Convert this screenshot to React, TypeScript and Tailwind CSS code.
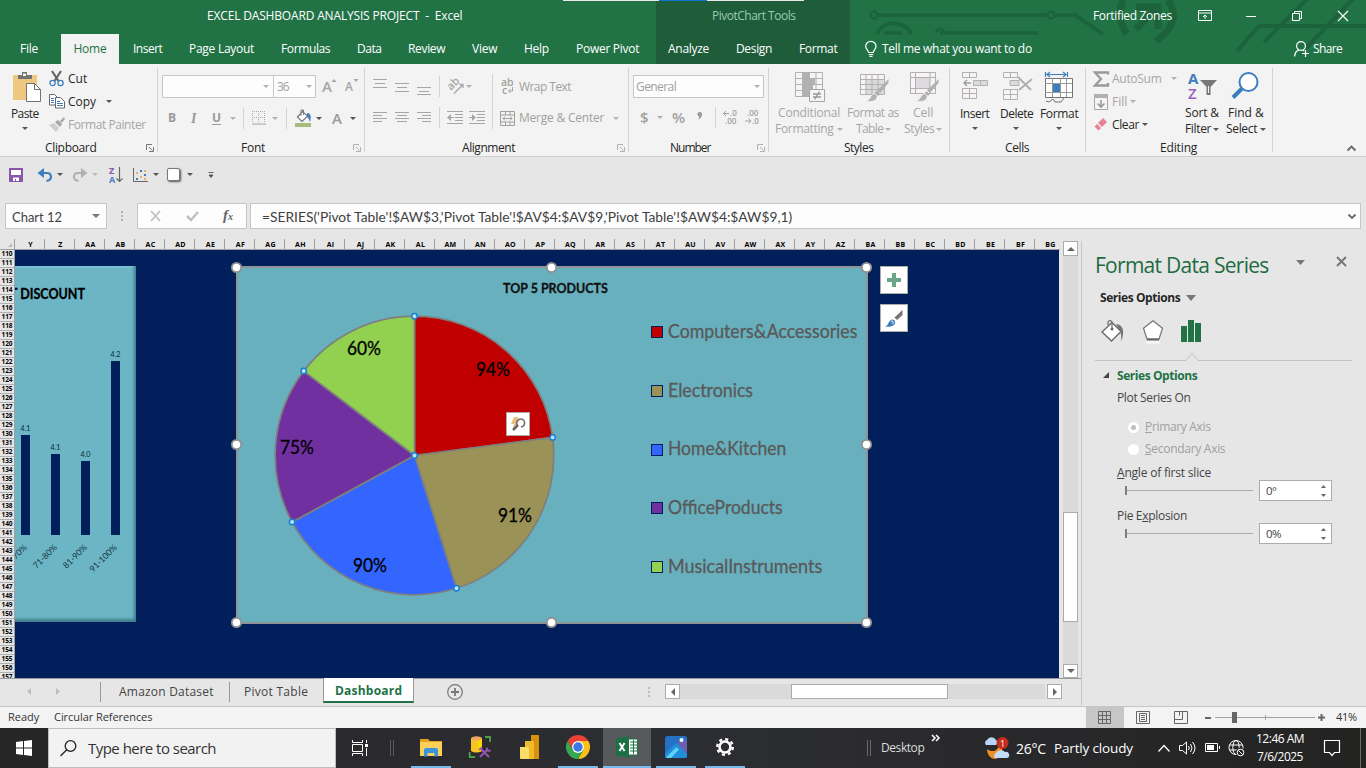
import React, { useLayoutEffect, useRef } from "react";

const UI = "font-['Open_Sans','Noto_Sans',sans-serif]";
const CAL = "font-['Lato','Open_Sans',sans-serif]";

/* A one-line label that fills its own box, by tracking or (squeeze) by glyph width. */
function T({ className = "", squeeze, children }: { className?: string; squeeze?: boolean; children: React.ReactNode }) {
  const box = useRef<HTMLSpanElement>(null);
  const inner = useRef<HTMLSpanElement>(null);
  useLayoutEffect(() => {
    const b = box.current!;
    const i = inner.current!;
    if (squeeze) {
      i.style.transform = "none";
      i.style.transform = `scaleX(${b.offsetWidth / i.offsetWidth})`;
      return;
    }
    i.style.letterSpacing = "0px";
    const n = (i.textContent || "").length;
    i.style.letterSpacing = (b.offsetWidth - i.offsetWidth) / n + "px";
  }, [squeeze]);
  return (
    <span ref={box} className={"inline-block shrink-0 whitespace-pre " + className}>
      <span ref={inner} className="inline-block origin-left">{children}</span>
    </span>
  );
}

function S({ w, h, className = "", children }: { w: number; h: number; className?: string; children: React.ReactNode }) {
  return (
    <svg width={w} height={h} viewBox={`0 0 ${w} ${h}`} fill="none" className={"block shrink-0 overflow-visible " + className}>
      {children}
    </svg>
  );
}

function Down({ className = "", c = "#555" }: { className?: string; c?: string }) {
  return (
    <S w={6} h={3} className={className}>
      <path d="M0 0h6L3 3z" fill={c} />
    </S>
  );
}

const Sep = ({ className = "" }: { className?: string }) => <div className={"w-px shrink-0 bg-[#d2d2d2] " + className} />;

function Launcher({ c, className }: { c: string; className: string }) {
  return (
    <S w={8} h={8} className={className}>
      <path d="M.5 6V.5H6M3 3l3.500 3.500M7.500 3v4.500H3" stroke={c} />
    </S>
  );
}

const G = "#b1b1b1";

function TitleBar() {
  return (
    <header className="relative h-[64px] shrink-0 bg-[#217346] text-[12px] text-white">
      <svg width="516" height="64" className="absolute left-[850px] top-0" fill="none" stroke="#1c633b">
        <circle cx="24" cy="15" r="3.500" strokeWidth="2.500" />
        <path d="M28 15h169M205 15h20l28 19" strokeWidth="3.500" />
        <circle cx="201" cy="15" r="3.500" strokeWidth="2.500" />
        <path d="M27 34a18 16 0 0 1 34 0M34 33h18M90 33h98" strokeWidth="3.500" />
        <path d="M86 33a4 4 0 0 1 8 0" strokeWidth="2.500" />
        <path d="M273 0q-8 17 4 34M318 0q15 22-12 41" strokeWidth="7" />
        <path d="M286 29l22-22M286 7h22v22" strokeWidth="7" />
        <path d="M387 51l22-25h107M414 42l48-48M456 48l50-52" strokeWidth="4" />
      </svg>
      <div className="relative flex h-[34px]">
        <div className="flex w-[656px] items-center pl-[207px] pb-[3px]">
          <T className="w-[255px]">EXCEL DASHBOARD ANALYSIS PROJECT  -  Excel</T>
        </div>
        <div className="flex w-[194px] items-center bg-[#1e5c3a] pl-[56px] pb-[3px] text-[#9bcbaf]">
          <T className="w-[83px]">PivotChart Tools</T>
        </div>
        <div className="flex items-center pl-[243px] pb-[3px]">
          <T className="w-[79px]">Fortified Zones</T>
          <S w={14} h={11} className="ml-[26px]">
            <path d="M.5.5h13v10H.5zM.5 3h13M7 9V5M5 7l2-2 2 2" stroke="#fff" />
          </S>
          <S w={10} h={10} className="ml-[34px]"><path d="M0 5.500h10" stroke="#fff" /></S>
          <S w={10} h={10} className="ml-[36px]">
            <path d="M.5 2.500h7v7h-7zM2.500 2V.5h7v7H8" stroke="#fff" />
          </S>
          <S w={10} h={10} className="ml-[36px]"><path d="M0 0l10 10M10 0L0 10" stroke="#fff" strokeWidth="1.100" /></S>
        </div>
        <div className="absolute left-[563px] top-0 flex h-px w-[241px] bg-[#e8e8e8]">
          <div className="ml-[96px] h-px w-[48px] bg-[#1177d7]" />
        </div>
      </div>
      <div className="relative flex h-[30px]">
        <div className="flex w-[656px] items-center">
          <T className="ml-[20px] w-[18px]">File</T>
          <div className="ml-[23px] flex h-full w-[58px] items-center justify-center bg-[#f3f3f3] text-[#217346]">
            <T className="w-[33px]">Home</T>
          </div>
          <T className="ml-[14px] w-[29px]">Insert</T>
          <T className="ml-[27px] w-[65px]">Page Layout</T>
          <T className="ml-[27px] w-[49px]">Formulas</T>
          <T className="ml-[27px] w-[24px]">Data</T>
          <T className="ml-[27px] w-[37px]">Review</T>
          <T className="ml-[27px] w-[25px]">View</T>
          <T className="ml-[27px] w-[25px]">Help</T>
          <T className="ml-[27px] w-[63px]">Power Pivot</T>
        </div>
        <div className="flex w-[194px] items-center bg-[#1e5c3a]">
          <T className="ml-[12px] w-[41px]">Analyze</T>
          <T className="ml-[27px] w-[36px]">Design</T>
          <T className="ml-[27px] w-[38px]">Format</T>
        </div>
        <div className="flex items-center">
          <S w={12} h={16} className="ml-[15px]">
            <path d="M3.500 11.500C3.500 9 .7 8.500.7 5.300a5 4.800 0 0 1 10.300 0C11 8.500 8.300 9 8.300 11.500zM3.700 13.500h4.600M4.500 15.400h3" stroke="#fff" strokeWidth="1.200" />
          </S>
          <T className="ml-[5px] w-[150px]">Tell me what you want to do</T>
          <S w={16} h={16} className="ml-[262px]">
            <circle cx="7" cy="5" r="4.400" stroke="#fff" strokeWidth="1.200" />
            <path d="M.6 15.500C1 12 3 9.500 5 9.200M9 9l1 1M11.500 9v7M8 12.500h7" stroke="#fff" strokeWidth="1.200" />
          </S>
          <T className="ml-[3px] w-[29px]">Share</T>
        </div>
      </div>
    </header>
  );
}

function Group({ className, children, label }: { className: string; children: React.ReactNode; label: React.ReactNode }) {
  return (
    <section className={"relative flex shrink-0 flex-col " + className}>
      <div className="flex h-[76px]">{children}</div>
      <div className="flex h-[17px] items-center">{label}</div>
      <div className="absolute right-0 top-[4px] h-[84px] w-px bg-[#d2d2d2]" />
    </section>
  );
}

function Lines({ ys, className }: { ys: [number, number, number][]; className: string }) {
  return (
    <S w={14} h={16} className={className}>
      {ys.map(([y, a, b], i) => <path key={i} d={`M${a} ${y + 0.5}H${b}`} stroke="#a6a6a6" />)}
    </S>
  );
}

function Brush() {
  return (
    <g>
      <path d="M28.500 7v4L20 21l-3-2.500z" fill="#b1b1b1" />
      <path d="M16.500 19.500l3 2.500-1.500 2-3.500-3z" fill="#a9a4a9" />
      <path d="M6 29c5-1 4-6 8-7.500 3 .5 4 3 2.500 5.500C14 30 9 30 6 29z" fill="#b1b1b1" stroke="#f3f3f3" />
    </g>
  );
}

function Ribbon() {
  return (
    <div className="flex h-[93px] shrink-0 border-b border-[#cfcfcf] bg-[#f3f3f3] text-[12px] text-[#262626]">
      <Group className="w-[158px]" label={<><T className="ml-[45px] w-[51px]">Clipboard</T><Launcher c="#777" className="ml-[50px]" /></>}>
        <div className="flex w-[49px] flex-col">
          <S w={30} h={31} className="ml-[12px] mt-[8px]">
            <path d="M1 3h24v25H1z" fill="#edc87e" />
            <path d="M6 7V3h4V0h5v3h5v4z" fill="#737373" /><path d="M11 1.500h3V4h-3z" fill="#f3f3f3" />
            <path d="M14.500 11.500h8l6 6v12h-14z" fill="#fff" stroke="#737373" /><path d="M22.500 11.500v6h6" stroke="#737373" />
          </S>
          <T className="ml-[11px] mt-[2px] w-[28px]">Paste</T>
          <Down className="ml-[22px] mt-[4px]" />
        </div>
        <div className="flex flex-col pt-[3px]">
          <div className="flex h-[23px] items-center">
            <S w={15} h={16}>
              <path d="M3 0l6.500 10M12 0L5.500 10" stroke="#666" strokeWidth="2.200" />
              <circle cx="3.500" cy="12" r="2.600" stroke="#3e7ebf" strokeWidth="1.300" /><circle cx="11.500" cy="12" r="2.600" stroke="#3e7ebf" strokeWidth="1.300" />
            </S>
            <T className="ml-[4px] w-[19px]">Cut</T>
          </div>
          <div className="flex h-[23px] items-center">
            <S w={16} h={15}>
              <path d="M.5.500h5l3 3V11h-8z" fill="#fff" stroke="#666" /><path d="M2 4.500h3M2 6.500h3M2 8.500h3" stroke="#3e7ebf" />
              <path d="M6.500 3.500h5l4 4v6.500h-9z" fill="#fff" stroke="#666" /><path d="M8 7.500h3M8 9.500h6M8 11.500h6" stroke="#3e7ebf" />
            </S>
            <T className="ml-[3px] w-[28px]">Copy</T>
            <Down className="ml-[10px]" />
          </div>
          <div className="flex h-[23px] items-center text-[#a6a6a6]">
            <S w={16} h={15}>
              <path d="M0 8l5-2 5 5-3 4z" fill="#d0ccd0" /><path d="M6 5l5 5 2-3-4-4zM11 4l4-4 1 2-3.500 4z" fill="#a6a6a6" />
            </S>
            <T className="ml-[3px] w-[78px]">Format Painter</T>
          </div>
        </div>
      </Group>

      <Group className="w-[207px]" label={<><T className="ml-[83px] w-[24px]">Font</T><Launcher c={G} className="ml-[88px]" /></>}>
        <div className="flex flex-col pl-[4px]">
          <div className="mt-[11px] flex h-[23px] items-center">
            <div className="flex h-[23px] w-[112px] items-center justify-end border border-[#c6c6c6] bg-[#fdfdfd] pr-[4px]"><Down c={G} /></div>
            <div className="-ml-px flex h-[23px] w-[43px] items-center border border-[#c6c6c6] bg-[#fdfdfd] text-[#a0a0a0]">
              <T className="ml-[3px] w-[12px]">36</T><Down c={G} className="ml-[17px]" />
            </div>
            <span className="ml-[6px] w-[10px] text-[15px] font-semibold text-[#a6a6a6]">A</span><S w={4} h={3} className="mb-[12px]"><path d="M2 0l2.500 3h-5z" fill="#a6a6a6" /></S>
            <span className="ml-[9px] w-[9px] text-[12px] font-semibold text-[#a6a6a6]">A</span><S w={4} h={3} className="mb-[12px]"><path d="M2 3l2.500-3h-5z" fill="#a6a6a6" /></S>
          </div>
          <div className="mt-[9px] flex h-[22px] items-center text-[#9a9a9a]">
            <span className="ml-[6px] w-[9px] text-[12px] font-bold">B</span>
            <span className="ml-[14px] w-[8px] font-['Liberation_Serif',serif] text-[14px] font-bold italic">I</span>
            <span className="ml-[13px] w-[9px] border-b border-[#9a9a9a] text-[12px] font-bold leading-[13px]">U</span>
            <Down c={G} className="ml-[9px]" />
            <Sep className="ml-[7px] h-[21px]" />
            <S w={14} h={14} className="ml-[8px]">
              <path d="M0 .5h14M0 6.500h14M.5 0v12M6.500 0v12M12.500 0v12" stroke="#b7a3b7" strokeDasharray="1 1" /><path d="M0 13h14" stroke="#a0a0a0" />
            </S>
            <Down c={G} className="ml-[6px]" />
            <Sep className="ml-[8px] h-[21px]" />
            <S w={17} h={17} className="ml-[8px]">
              <path d="M0 13h16v4H0z" fill="#a9bb7c" /><path d="M2.500 7l5-5.500 5 4.500-5.500 5.500z" fill="#fff" stroke="#777" strokeWidth="1.200" /><path d="M6 6V0h2.500v5" stroke="#777" />
              <path d="M12 3c4 0 4.500 4 3 9-1-2-1-4-3-5z" fill="#3e7ebf" />
            </S>
            <Down className="ml-[4px]" />
            <span className="ml-[10px] w-[11px] text-[15px] font-semibold">A</span>
            <Down className="ml-[7px]" />
          </div>
        </div>
      </Group>

      <Group className="w-[264px]" label={<><T className="ml-[97px] w-[53px]">Alignment</T><Launcher c={G} className="ml-[102px]" /></>}>
        <div className="flex flex-col pl-[8px]">
          <div className="mt-[11px] flex h-[23px] items-center">
            <Lines className="" ys={[[0, 0, 14], [4, 2, 12], [8, 0, 14]]} />
            <Lines className="ml-[8px]" ys={[[4, 0, 14], [8, 2, 12], [12, 0, 14]]} />
            <Lines className="ml-[8px]" ys={[[8, 0, 14], [12, 2, 12], [15, 0, 14]]} />
            <Sep className="ml-[8px] h-[21px]" />
            <S w={17} h={15} className="ml-[7px]">
              <text x="0" y="0" fontSize="11" fontWeight="600" fill="#a6a6a6" transform="translate(4 12) rotate(-45)">ab</text>
              <path d="M7 14.500L16 5.500M12.500 5.500H16V9" stroke="#a6a6a6" strokeWidth="1.300" />
            </S>
            <Down c={G} className="ml-[2px]" />
          </div>
          <div className="mt-[8px] flex h-[22px] items-center">
            <Lines className="" ys={[[3, 0, 14], [6, 0, 9], [9, 0, 14], [12, 0, 9]]} />
            <Lines className="ml-[8px]" ys={[[3, 0, 14], [6, 2, 12], [9, 0, 14], [12, 2, 12]]} />
            <Lines className="ml-[8px]" ys={[[3, 0, 14], [6, 5, 14], [9, 0, 14], [12, 5, 14]]} />
            <Sep className="ml-[8px] h-[21px]" />
            <S w={16} h={13} className="ml-[7px]"><path d="M0 .5h16M8 3.500h8M8 6.500h8M8 9.500h8M0 12.500h16M1 6.500h6" stroke="#a6a6a6" /><path d="M0 6.500L4 3v7z" fill="#a6a6a6" /></S>
            <S w={16} h={13} className="ml-[6px]"><path d="M0 .5h16M8 3.500h8M8 6.500h8M8 9.500h8M0 12.500h16M0 6.500h5" stroke="#a6a6a6" /><path d="M7 6.500L3 3v7z" fill="#a6a6a6" /></S>
          </div>
        </div>
        <Sep className="ml-[7px] mt-[10px] h-[55px]" />
        <div className="flex flex-col pl-[7px] text-[#a0a0a0]">
          <div className="mt-[11px] flex h-[23px] items-center">
            <S w={16} h={15}>
              <text x="1" y="7" fontSize="10.500" fontWeight="600" fill="#a0a0a0">ab</text><text x="2" y="15" fontSize="10.500" fontWeight="600" fill="#a0a0a0">c</text>
              <path d="M12.500 8v4H9M10.500 10l-2 2 2 2" stroke="#a0a0a0" />
            </S>
            <T className="ml-[3px] w-[52px]">Wrap Text</T>
          </div>
          <div className="mt-[9px] flex h-[22px] items-center">
            <S w={15} h={15}><path d="M.5.5h14v14H.5zM.5 4h14M.5 11h14M5.500 0v4M10 0v4M5.500 11v4M10 11v4M3 7.500h9M5 5.500l-2 2 2 2M10 5.500l2 2-2 2" stroke="#a0a0a0" /></S>
            <T className="ml-[4px] w-[85px]">Merge &amp; Center</T>
            <Down c={G} className="ml-[9px]" />
          </div>
        </div>
      </Group>

      <Group className="w-[140px]" label={<><T className="ml-[41px] w-[41px]">Number</T><Launcher c={G} className="ml-[46px]" /></>}>
        <div className="flex flex-col pl-[4px] text-[#a0a0a0]">
          <div className="mt-[11px] flex h-[23px] w-[131px] items-center border border-[#c6c6c6] bg-[#fdfdfd]">
            <T className="ml-[2px] w-[40px]">General</T><Down c={G} className="ml-[78px]" />
          </div>
          <div className="mt-[8px] flex h-[22px] items-center text-[14px]">
            <span className="ml-[7px] w-[9px] text-[15px] font-semibold">$</span>
            <Down c={G} className="ml-[8px]" />
            <T className="ml-[9px] w-[13px] font-semibold" squeeze>%</T>
            <S w={6} h={8} className="mb-[2px] ml-[12px]"><path d="M2.500 0a2.300 2.300 0 0 1 2.500 2.500C5 5 3.500 6.500 1 7.500 2 6 2.500 5 2 4.500A2.300 2.300 0 0 1 2.500 0z" fill="#9a9a9a" /></S>
            <Sep className="ml-[12px] h-[21px]" />
            <S w={14} h={14} className="ml-[7px]"><path d="M0 3.500h6M3 1L.5 3.500 3 6" stroke="#a0a0a0" /><text x="7" y="6" fontSize="8" fontWeight="600" fill="#a0a0a0">.0</text><text x="2" y="14" fontSize="8" fontWeight="600" fill="#a0a0a0">.00</text></S>
            <S w={14} h={14} className="ml-[8px]"><path d="M0 11h6M3.500 8.500L6 11l-2.500 2.500" stroke="#a0a0a0" /><text x="2" y="6" fontSize="8" fontWeight="600" fill="#a0a0a0">.00</text><text x="7" y="14" fontSize="8" fontWeight="600" fill="#a0a0a0">.0</text></S>
          </div>
        </div>
      </Group>

      <Group className="w-[181px]" label={<T className="ml-[75px] w-[29px]">Styles</T>}>
        <div className="flex text-[#a6a6a6]">
          <div className="ml-[6px] w-[68px]">
            <S w={30} h={31} className="ml-[20px] mt-[8px]">
              <path d="M.5.5h27v24H.5z" fill="#f7f3f7" stroke="#b1b1b1" /><path d="M0 6.500h27M0 12.500h27M0 18.500h27M7.500 0v24M14.500 0v24M21 0v24" stroke="#b1b1b1" />
              <path d="M8 0h6v6H8zM8 6h12v6H8zM8 12h10v6H8zM8 18h6v6H8z" fill="#b1b1b1" /><path d="M14.500 17.500h15v12h-15z" fill="#f7f3f7" stroke="#a6a6a6" />
              <path d="M18 22h8M18 25h8M24.500 19.500l-5 8" stroke="#999" strokeWidth="1.300" />
            </S>
            <div className="mt-[2px] flex h-[16px] items-center pl-[3px]"><T className="w-[62px]">Conditional</T></div>
            <div className="flex h-[16px] items-center"><T className="w-[59px]">Formatting</T><Down c={G} className="ml-[3px]" /></div>
          </div>
          <div className="ml-[4px] w-[53px]">
            <S w={30} h={31} className="ml-[13px] mt-[8px]">
              <path d="M.5 2.500h24v20H.5z" fill="#f7f3f7" stroke="#b1b1b1" /><path d="M6 8h18v14H6z" fill="#dcdadc" /><path d="M0 7.500h24M0 12.500h24M0 17.500h24M6 2v20M12 2v20M18 2v20" stroke="#b1b1b1" /><Brush />
            </S>
            <div className="mt-[2px] flex h-[16px] items-center"><T className="w-[52px]">Format as</T></div>
            <div className="flex h-[16px] items-center pl-[9px]"><T className="w-[27px]">Table</T><Down c={G} className="ml-[2px]" /></div>
          </div>
          <div className="ml-[4px] w-[42px]">
            <S w={30} h={31} className="ml-[6px] mt-[8px]">
              <path d="M.5.5h25v21H.5z" fill="#f7f3f7" stroke="#b1b1b1" /><path d="M6 6h14v10H6z" fill="#dcdadc" /><path d="M0 5.500h25M0 16.500h25M5.500 0v21M20 0v21" stroke="#b1b1b1" /><Brush />
            </S>
            <div className="mt-[2px] flex h-[16px] items-center pl-[9px]"><T className="w-[20px]">Cell</T></div>
            <div className="flex h-[16px] items-center"><T className="w-[30px]">Styles</T><Down c={G} className="ml-[2px]" /></div>
          </div>
        </div>
      </Group>

      <Group className="w-[136px]" label={<T className="ml-[55px] w-[24px]">Cells</T>}>
        <div className="flex">
          <div className="ml-[10px] w-[30px]">
            <S w={28} h={31} className="ml-[2px] mt-[8px]">
              <path d="M.5.500h14v5H.5zM7.500.5v5M.5 16.500h14v10H.5zM.5 21.500h14M7.500 16.500v10" fill="#f7f3f7" stroke="#b1b1b1" /><path d="M11.500 8.500h14v5h-14zM18.500 8.500v5" fill="#dcdadc" stroke="#b1b1b1" /><path d="M2 11h7M5 8l-3 3 3 3" stroke="#a0a0a0" strokeWidth="1.500" />
            </S>
            <T className="mt-[2px] w-[29px]">Insert</T><Down className="ml-[12px] mt-[4px]" />
          </div>
          <div className="ml-[10px] w-[34px]">
            <S w={30} h={31} className="ml-[3px] mt-[8px]">
              <path d="M.5.500h14v5H.5zM7.500.5v5M.5 17.500h14v10H.5zM.5 22.500h14M7.500 17.500v10" fill="#f7f3f7" stroke="#b1b1b1" /><path d="M7 8.500h9v5H7z" fill="#dcdadc" stroke="#b1b1b1" /><path d="M15 5l13 13M29 7L16 18" stroke="#b1b1b1" strokeWidth="2" />
            </S>
            <T className="mt-[2px] w-[33px]">Delete</T><Down className="ml-[13px] mt-[4px]" />
          </div>
          <div className="ml-[6px] w-[40px]">
            <S w={30} h={31} className="ml-[5px] mt-[8px]">
              <path d="M.5 0v5M22.500 0v5M2 2.500h19M5 0L2 2.500 5 5M18 0l3 2.500L18 5" stroke="#3e7ebf" strokeWidth="1.200" />
              <path d="M.5 6.500h27v19H.5z" fill="#fff" stroke="#737373" /><path d="M0 11.500h27M0 20.500h27M7.500 6v19M15.500 6v19M21.500 6v19" stroke="#999" /><path d="M8 12h7v8H8z" fill="#3e7ebf" /><path d="M1 29l3 1 4-3 2 3h6l3-4" stroke="#737373" />
            </S>
            <T className="mt-[2px] w-[38px]">Format</T><Down className="ml-[16px] mt-[4px]" />
          </div>
        </div>
      </Group>

      <Group className="w-[187px]" label={<T className="ml-[74px] w-[37px]">Editing</T>}>
        <div className="flex w-[99px] flex-col pl-[7px] pt-[3px]">
          <div className="flex h-[23px] items-center text-[#a6a6a6]">
            <S w={16} h={16}><path d="M15 3.500V1.500H2l6 6.500-6 6.500h13v-2.500" stroke="#9a9a9a" strokeWidth="2.300" /></S>
            <T className="ml-[3px] w-[50px]">AutoSum</T><Down c={G} className="ml-[9px]" />
          </div>
          <div className="flex h-[23px] items-center text-[#a6a6a6]">
            <S w={15} h={16} className="ml-px"><path d="M.5.500h13v15H.5z" fill="#f7f3f7" stroke="#a6a6a6" /><path d="M0 0h14v4H0z" fill="#b1b1b1" /><path d="M7 6v7M3.500 9.500L7 13l3.500-3.500" stroke="#999" strokeWidth="1.600" /></S>
            <T className="ml-[3px] w-[15px]">Fill</T><Down c={G} className="ml-[3px]" />
          </div>
          <div className="flex h-[23px] items-center">
            <S w={15} h={13} className="ml-px"><path d="M4 5l5-5 4 4-5 5z" fill="#e58395" /><path d="M3 6l4 4-2.500 2.500L.5 8.500z" fill="#e58395" /></S>
            <T className="ml-[3px] w-[27px]">Clear</T><Down className="ml-[3px]" />
          </div>
        </div>
        <div className="w-[35px]">
          <S w={30} h={31} className="ml-[3px] mt-[8px]">
            <text x="0" y="12" fontSize="15" fontWeight="700" fill="#3e7ebf">A</text><text x="0" y="27" fontSize="15" fontWeight="600" fill="#9a5fc0">Z</text>
            <path d="M12 8h17l-6.500 7v8h-4v-8z" fill="#777" /><path d="M20.500 14v7" stroke="#f3f3f3" />
          </S>
          <div className="mt-[2px] flex h-[16px] items-center"><T className="w-[34px]">Sort &amp;</T></div>
          <div className="flex h-[16px] items-center"><T className="w-[26px]">Filter</T><Down className="ml-[2px]" /></div>
        </div>
        <div className="ml-[6px] w-[40px]">
          <S w={30} h={31} className="ml-[5px] mt-[8px]"><circle cx="17.500" cy="10" r="9" fill="#fff" stroke="#3e7ebf" strokeWidth="2" /><path d="M11 16.500L2 25.500" stroke="#3e7ebf" strokeWidth="4" /></S>
          <div className="mt-[2px] flex h-[16px] items-center pl-[2px]"><T className="w-[36px]">Find &amp;</T></div>
          <div className="flex h-[16px] items-center"><T className="w-[31px]">Select</T><Down className="ml-[3px]" /></div>
        </div>
      </Group>
      <div className="flex flex-1 items-end justify-end pb-[5px] pr-[10px]">
        <S w={9} h={5}><path d="M.5 4.500l4-4 4 4" stroke="#666" strokeWidth="1.800" /></S>
      </div>
    </div>
  );
}

function QuickAccess() {
  return (
    <div className="flex h-[36px] shrink-0 items-center pb-px">
      <S w={14} h={14} className="ml-[9px]"><path d="M1 1h12v12H1z" fill="#fff" stroke="#8a56ac" strokeWidth="2" /><path d="M1 7h12v6H1z" fill="#8a56ac" /><path d="M4 9.500h6V13H7v-2H6v2H4z" fill="#fff" /></S>
      <S w={15} h={14} className="ml-[15px]"><path d="M2 5h7q4 0 4 4 0 3-4.500 4" stroke="#3e7ebf" strokeWidth="2.200" /><path d="M6 0v10L-.5 5z" fill="#3e7ebf" /></S>
      <Down className="ml-[4px]" />
      <S w={15} h={14} className="ml-[10px]"><path d="M12 5H5Q1 5 1 9q0 3 4.500 4" stroke="#b1b1b1" strokeWidth="2.200" /><path d="M8 0v10l6.500-5z" fill="#b1b1b1" /></S>
      <Down c="#bbb" className="ml-[4px]" />
      <S w={14} h={16} className="ml-[11px]"><text x="0" y="7" fontSize="9" fontWeight="700" fill="#8a56ac">Z</text><text x="0" y="15.500" fontSize="9" fontWeight="700" fill="#3e7ebf">A</text><path d="M10.500 0v15M7.500 11.500l3 3 3-3" stroke="#666" strokeWidth="1.200" /></S>
      <S w={15} h={14} className="ml-[10px]"><path d="M.5 0v13.500H15" stroke="#666" /><path d="M7 2h2v2H7zM11 6h2v2h-2zM3 10h2v2H3z" fill="#3e7ebf" /><path d="M3 4h2v2H3zM7 8h2v2H7zM11 10h2v2h-2zM11 2h2v2h-2z" fill="#e8b35c" /></S>
      <Down className="ml-[5px]" />
      <div className="ml-[8px] h-[13px] w-[13px] rounded-[2px] border border-[#777] bg-white shadow-[1px_1px_2px_#555]" />
      <Down className="ml-[7px]" />
      <S w={6} h={6} className="ml-[15px]"><path d="M.5.5h5M1 3h4L3 5.500z" stroke="#555" fill="#555" strokeWidth=".9" /></S>
    </div>
  );
}

function FormulaBar() {
  return (
    <div className={"flex h-[46px] shrink-0 items-start pt-[10px] text-[14px] text-[#404040] " + CAL}>
      <div className="ml-[5px] flex h-[26px] w-[102px] items-center border border-[#c6c6c6] bg-[#fdfdfd]">
        <T squeeze className="ml-[6px] w-[50px]">Chart 12</T>
        <S w={8} h={4} className="ml-[30px]"><path d="M0 0h8L4 4z" fill="#777" /></S>
      </div>
      <S w={2} h={11} className="ml-[14px] mt-[8px]"><path d="M0 0h2v2H0zM0 4h2v2H0zM0 8h2v2H0z" fill="#b1b1b1" /></S>
      <div className="ml-[14px] flex h-[26px] w-[110px] items-center border border-[#c6c6c6] bg-[#fdfdfd]">
        <S w={11} h={10} className="ml-[12px]"><path d="M1 0l9 10M10 0L1 10" stroke="#c0c0c0" strokeWidth="1.800" /></S>
        <S w={13} h={10} className="ml-[25px]"><path d="M1 5l4 4 7-8" stroke="#c0c0c0" strokeWidth="2.500" /></S>
        <span className="ml-[24px] mb-[2px] font-['Liberation_Serif',serif] text-[15px] font-bold italic text-[#666]">f<span className="text-[10px]">x</span></span>
      </div>
      <div className="ml-[3px] flex h-[26px] w-[1111px] items-center border border-[#c6c6c6] bg-[#fdfdfd]">
        <T squeeze className="ml-[11px] w-[530px]">=SERIES('Pivot Table'!$AW$3,'Pivot Table'!$AV$4:$AV$9,'Pivot Table'!$AW$4:$AW$9,1)</T>
        <S w={8} h={5} className="ml-[556px]"><path d="M.5.500l3.500 3.500 3.500-3.500" stroke="#666" strokeWidth="1.800" /></S>
      </div>
    </div>
  );
}

const COLS = "Y Z AA AB AC AD AE AF AG AH AI AJ AK AL AM AN AO AP AQ AR AS AT AU AV AW AX AY AZ BA BB BC BD BE BF BG".split(" ");
const ROWS = Array.from({ length: 48 }, (_, i) => 110 + i);

const PIE = [
  { name: "Computers&Accessories", v: 94, c: "#c00000", lx: 493, ly: 370, wc: "w-[189px]" },
  { name: "Electronics", v: 91, c: "#9a9256", lx: 515, ly: 516, wc: "w-[85px]" },
  { name: "Home&Kitchen", v: 90, c: "#3366ff", lx: 370, ly: 566, wc: "w-[118px]" },
  { name: "OfficeProducts", v: 75, c: "#7030a0", lx: 297, ly: 448, wc: "w-[115px]" },
  { name: "MusicalInstruments", v: 60, c: "#92d050", lx: 364, ly: 349, wc: "w-[154px]" },
];

function Pie() {
  const total = PIE.reduce((s, p) => s + p.v, 0);
  const cx = 176.5, cy = 187.5, r = 139.3;
  const at = (t: number): [number, number] => [cx + r * Math.sin(t * 2 * Math.PI), cy - r * Math.cos(t * 2 * Math.PI)];
  let acc = 0;
  const slices = PIE.map((p) => {
    const a = at(acc / total);
    acc += p.v;
    const b = at(acc / total);
    return { p, a, d: `M${cx} ${cy}L${a[0]} ${a[1]}A${r} ${r} 0 0 1 ${b[0]} ${b[1]}Z` };
  });
  return (
    <svg width="380" height="354" className={"absolute left-0 top-0 " + CAL}>
      {slices.map((s) => <path key={s.p.name} d={s.d} fill={s.p.c} stroke="#7f7f7f" strokeWidth="1.700" />)}
      {[[cx, cy] as [number, number], ...slices.map((s) => s.a)].map(([x, y], i) => (
        <circle key={i} cx={x} cy={y} r="2.700" fill="#bfe0f5" stroke="#1382d6" strokeWidth="1.500" />
      ))}
      {slices.map(({ p }) => (
        <text key={p.name} x={p.lx - 238 - 17} y={p.ly - 268 + 6} fontSize="18.500" textLength="34" lengthAdjust="spacingAndGlyphs" fill="#000" stroke="#000" strokeWidth=".3">{p.v}%</text>
      ))}
    </svg>
  );
}

function DiscountChart() {
  const bars = [[6, 169, "4.1", "61-70%"], [36, 188, "4.1", "71-80%"], [66, 195, "4.0", "81-90%"], [96, 95, "4.2", "91-100%"]] as const;
  return (
    <div className={"absolute left-0 top-[16px] h-[356px] w-[121px] overflow-hidden bg-[#6bb5c5] shadow-[inset_-2px_-3px_3px_#3f7e8c,inset_0_2px_2px_#7cc3d1] " + CAL}>
      <svg width="121" height="356">
        <text x="-5" y="32.500" fontSize="14.500" fontWeight="700" textLength="75" lengthAdjust="spacingAndGlyphs" stroke="#000" strokeWidth=".3">T DISCOUNT</text>
        {bars.map(([x, y, v, l]) => (
          <g key={x}>
            <rect x={x} y={y} width="9" height={269 - y} fill="#001f5b" />
            <text x={x - 0.5} y={y - 4.5} fontSize="8" textLength="10" lengthAdjust="spacingAndGlyphs" fill="#0c2a33">{v}</text>
            <text x={x + 6.5} y={282} fontSize="8.500" textAnchor="end" fill="#16323a" transform={`rotate(-45 ${x + 6.5} 282)`}>{l}</text>
          </g>
        ))}
      </svg>
    </div>
  );
}

function ProductsChart() {
  return (
    <div className={"absolute left-[221px] top-[16px] h-[358px] w-[632px] border-2 border-[#8f9496] bg-[#68b0be] " + CAL}>
      <Pie />
      <div className="-mt-[3px] ml-[265px] flex h-[44px] items-center text-[14px] font-bold text-[#111]"><T squeeze className="w-[105px] [-webkit-text-stroke:0.3px_#111]">TOP 5 PRODUCTS</T></div>
      <ul className="ml-[413px] -mt-[6px] flex flex-col">
        {PIE.map((p) => (
          <li key={p.name} className="flex h-[58.700px] items-center text-[19px] text-[#595959]">
            <svg width="12" height="12" className="shrink-0"><rect x=".5" y=".5" width="11" height="11" fill={p.c} stroke="#001f5b" /></svg>
            <T squeeze className={"ml-[5px] -mt-[2px] [-webkit-text-stroke:0.3px_#595959] " + p.wc}>{p.name}</T>
          </li>
        ))}
      </ul>
      <svg width="632" height="358" className="absolute -left-[2px] -top-[2px] overflow-visible">
        {[[0.5, 1.5], [315.5, 1.5], [630.5, 1.5], [0.5, 178.5], [630.5, 178.5], [0.5, 356.5], [315.5, 356.5], [630.5, 356.5]].map(([x, y], i) => (
          <circle key={i} cx={x} cy={y} r="4.700" fill="#fff" stroke="#8f8f8f" strokeWidth="1.800" />
        ))}
      </svg>
      <div className="absolute left-[268px] top-[144px] flex h-[24px] w-[24px] items-center justify-center border border-[#ababab] bg-white">
        <S w={14} h={14}><path d="M3 0h4.500L6 4h2L2 12l1-5H0z" fill="#edc07e" /><path d="M6.500 8.500A4 4 0 1 1 10 10" stroke="#737373" strokeWidth="1.600" /><path d="M7 8l-5 5" stroke="#666" strokeWidth="2.500" /></S>
      </div>
    </div>
  );
}

function Sheet() {
  return (
    <div className="flex h-[439px] w-[1060px] shrink-0 flex-col overflow-hidden">
      <div className="flex h-[11px] shrink-0 overflow-hidden">
        <div className="flex w-[15px] shrink-0 items-end justify-end border-b border-r border-[#9f9f9f] p-[2px]"><S w={4} h={4}><path d="M4 0v4H0z" fill="#bbb" /></S></div>
        {COLS.map((c) => (
          <div key={c} className="flex w-[30px] shrink-0 items-center justify-center border-b border-r border-[#9f9f9f] pl-[2px] text-[7px] font-bold leading-none tracking-[0.3px] text-black">{c}</div>
        ))}
      </div>
      <div className="flex h-[428px]">
        <div className="w-[15px] shrink-0 overflow-hidden border-r border-[#9f9f9f]">
          {ROWS.map((r) => (
            <div key={r} className="flex h-[9px] items-center justify-center border-b border-[#b0b0b0] pt-px text-[6.500px] font-bold leading-none text-black">{r}</div>
          ))}
        </div>
        <div className="relative w-[1044px] shrink-0 overflow-hidden bg-[#001f5b]">
          <DiscountChart />
          <ProductsChart />
          <div className="absolute left-[865px] top-[16px] flex flex-col gap-[10px]">
            <div className="flex h-[28px] w-[28px] items-center justify-center border border-[#ababab] bg-white"><S w={14} h={14}><path d="M5 0h4v5h5v4H9v5H5V9H0V5h5z" fill="#6aa58c" /></S></div>
            <div className="flex h-[28px] w-[28px] items-center justify-center border border-[#ababab] bg-white">
              <S w={18} h={17}><path d="M17.500 0v5L12 10 9.500 7.500z" fill="#737373" /><path d="M0 16.500c4-1 3-6 7-7 3 0 4 3 2.500 5C7 17 3 17 0 16.500z" fill="#3e7ebf" /><path d="M6 11.500c2-1.500 3 1 1.500 2.500" stroke="#fff" /></S>
            </div>
          </div>
        </div>
      </div>
    </div>
  );
}

function VScroll() {
  return (
    <div className="flex h-[439px] w-[21px] shrink-0 flex-col pl-[3px] pt-[2px]">
      <div className="flex h-[15px] w-[15px] shrink-0 items-center justify-center border border-[#ababab] bg-white"><S w={8} h={4}><path d="M4 0l4 4H0z" fill="#666" /></S></div>
      <div className="flex h-[408px] w-[15px] flex-col bg-[#dadada] pt-[256px]"><div className="h-[110px] border border-[#ababab] bg-white" /></div>
      <div className="flex h-[14px] w-[15px] shrink-0 items-center justify-center border border-[#ababab] bg-white"><S w={8} h={4}><path d="M0 0h8L4 4z" fill="#666" /></S></div>
    </div>
  );
}

function Slider({ value }: { value: string }) {
  return (
    <div className="-mt-[2px] flex h-[21px] items-center pl-[43px]">
      <div className="h-[9px] w-[2px] bg-[#808080]" />
      <div className="h-px w-[126px] bg-[#ababab]" />
      <div className="ml-[6px] flex h-[21px] w-[73px] items-center justify-between border border-[#ababab] bg-white pl-[6px] pr-[5px] text-[11.500px] leading-none">
        <span className="tracking-[-0.5px]">{value}</span>
        <div className="flex flex-col gap-[6px]"><S w={5} h={3}><path d="M2.500 0L5 3H0z" fill="#666" /></S><S w={5} h={3}><path d="M0 0h5L2.500 3z" fill="#666" /></S></div>
      </div>
    </div>
  );
}

function Pane() {
  return (
    <aside className="mt-[2px] flex h-[464px] w-[285px] flex-col border-l border-[#c6c6c6] text-[12px] text-[#444]">
      <div className="flex h-[45px] items-center pt-[4px]">
        <T className="ml-[13px] w-[174px] text-[21px] leading-none text-[#1f6b42]">Format Data Series</T>
        <S w={9} h={5} className="mb-[7px] ml-[27px]"><path d="M0 0h9L4.500 5z" fill="#777" /></S>
        <S w={10} h={10} className="mb-[7px] ml-[32px]"><path d="M0 0l9 9M9 0L0 9" stroke="#777" strokeWidth="2" /></S>
      </div>
      <div className="flex h-[24px] items-center font-bold text-[#262626]">
        <T className="ml-[18px] w-[80px]">Series Options</T>
        <S w={10} h={6} className="ml-[6px]"><path d="M0 0h10L5 6z" fill="#777" /></S>
      </div>
      <div className="flex h-[42px] items-center">
        <S w={24} h={23} className="ml-[19px]"><path d="M1 12L11 2.500l9 9L10.500 21z" fill="#fff" stroke="#666" strokeWidth="1.300" /><path d="M7 5V2q2-3 4 0v7" stroke="#777" strokeWidth="1.300" /><circle cx="11" cy="9" r="1.500" fill="#666" /><path d="M15 4c7 1 9 6 5.500 17-.5-5 0-8-2-11z" fill="#737373" /></S>
        <S w={22} h={23} className="ml-[17px]"><path d="M11 .7l9.500 7.500-3.500 11H5l-3.500-11z" fill="#fff" stroke="#737373" strokeWidth="1.200" /><path d="M5 19.500h12" stroke="#666" strokeWidth="2" /><path d="M5 21h12l1 2.500H4z" fill="#f7f7f7" /></S>
        <S w={21} h={22} className="ml-[17px]"><path d="M0 6h6v16H0zM7 0h6v22H7zM14 3h6v19h-6z" fill="#217346" /></S>
      </div>
      <S w={258} h={9} className="ml-[13px]"><path d="M0 8.500h91l6-7.500 6 7.500h154" stroke="#c3c3c3" /></S>
      <div className="mt-[5px] flex h-[20px] items-center font-bold text-[#217346]">
        <S w={6} h={6} className="mb-[3px] ml-[21px]"><path d="M6 0v6H0z" fill="#444" /></S>
        <T className="ml-[8px] w-[80px]">Series Options</T>
      </div>
      <div className="mt-px flex h-[22px] items-center pl-[35px]"><T className="w-[73px]">Plot Series On</T></div>
      <div className="mt-[7px] flex h-[22px] items-center pl-[47px] text-[#a0a0a0]">
        <div className="-ml-px flex h-[11px] w-[11px] items-center justify-center rounded-full bg-white"><div className="h-[5px] w-[5px] rounded-full bg-[#c0c0c0]" /></div>
        <T className="ml-[6px] w-[66px]"><u>P</u>rimary Axis</T>
      </div>
      <div className="flex h-[22px] items-center pl-[47px] text-[#a0a0a0]">
        <div className="-ml-px h-[11px] w-[11px] rounded-full bg-white" />
        <T className="ml-[6px] w-[80px]"><u>S</u>econdary Axis</T>
      </div>
      <div className="mt-[4px] flex h-[18px] items-center pl-[35px]"><T className="w-[94px]"><u>A</u>ngle of first slice</T></div>
      <Slider value="0°" />
      <div className="mt-[6px] flex h-[18px] items-center pl-[35px]"><T className="w-[70px]">Pie E<u>x</u>plosion</T></div>
      <Slider value="0%" />
    </aside>
  );
}

function SheetTabs() {
  return (
    <div className="flex h-[27px] items-center border-t border-[#999] pb-[1px] text-[12px] text-[#444]">
      <S w={4} h={7} className="ml-[27px]"><path d="M4 0v7L0 3.500z" fill="#bdbdbd" /></S>
      <S w={4} h={7} className="ml-[25px]"><path d="M0 0v7l4-3.500z" fill="#bdbdbd" /></S>
      <div className="ml-[40px] h-[20px] w-px bg-[#999]" />
      <T className="ml-[18px] w-[95px]">Amazon Dataset</T>
      <div className="ml-[15px] h-[20px] w-px bg-[#999]" />
      <T className="ml-[14px] w-[64px]">Pivot Table</T>
      <div className="-mt-[2px] ml-[15px] flex h-[25px] w-[91px] items-center border-x border-b-2 border-x-[#999] border-b-[#217346] bg-white font-bold text-[#217346]">
        <T className="ml-[11px] mt-[2px] w-[67px]">Dashboard</T>
      </div>
      <S w={16} h={16} className="ml-[33px]"><circle cx="8" cy="8" r="7.300" stroke="#777" strokeWidth="1.200" /><path d="M4 8h8M8 4v8" stroke="#777" strokeWidth="1.800" /></S>
      <S w={2} h={10} className="ml-[185px]"><path d="M0 0h2v2H0zM0 4h2v2H0zM0 8h2v2H0z" fill="#bbb" /></S>
      <div className="ml-[15px] flex h-[15px] w-[15px] items-center justify-center border border-[#ababab] bg-white"><S w={4} h={8}><path d="M4 0v8L0 4z" fill="#666" /></S></div>
      <div className="flex h-[15px] w-[365px] bg-[#dadada] pl-[111px]"><div className="h-[15px] w-[157px] border border-[#ababab] bg-white" /></div>
      <div className="ml-[2px] flex h-[15px] w-[15px] items-center justify-center border border-[#ababab] bg-white"><S w={4} h={8}><path d="M0 0v8l4-4z" fill="#666" /></S></div>
    </div>
  );
}

function StatusBar() {
  return (
    <div className="flex h-[22px] shrink-0 items-center border-t border-[#c6c6c6] bg-[#f3f3f3] text-[11px] text-[#333]">
      <T className="-mt-px ml-[8px] w-[31px]">Ready</T>
      <T className="ml-[15px] w-[98px]">Circular References</T>
      <div className="ml-[934px] flex h-full w-[38px] items-center bg-[#c6c6c6] pl-[12px]"><S w={13} h={13}><path d="M.5.5h12v12H.5zM4.500 0v13M8.500 0v13M0 4.500h13M0 8.500h13" stroke="#666" /></S></div>
      <S w={14} h={13} className="ml-[12px]"><path d="M.5.5h13v12H.5zM3.500 2.500h7v8h-7zM5 4.500h4M5 6.500h4M5 8.500h4" stroke="#666" /></S>
      <S w={14} h={13} className="ml-[24px]"><path d="M.5.5h13v12H.5zM.5 8.500h8V.5M5.500.5v4" stroke="#666" /></S>
      <div className="ml-[17px] h-[2px] w-[6px] bg-[#666]" />
      <S w={100} h={13} className="ml-[4px]"><path d="M0 6.500h100M50.500 4v5" stroke="#a0a0a0" /><path d="M17 1h5v11h-5z" fill="#666" /></S>
      <S w={7} h={7} className="ml-[3px]"><path d="M0 3.500h7M3.500 0v7" stroke="#666" strokeWidth="2" /></S>
      <T className="-mt-px ml-[11px] w-[21px]">41%</T>
    </div>
  );
}

function TaskButton({ className, active, children }: { className: string; active?: boolean; children: React.ReactNode }) {
  return (
    <div className={"flex h-[40px] shrink-0 flex-col items-center justify-between " + className}>
      <div className="flex h-[38px] items-center">{children}</div>
      {active && <div className="h-[2px] w-full bg-[#76b9ed]" />}
    </div>
  );
}

function Taskbar() {
  return (
    <div className="flex h-[40px] shrink-0 items-center bg-gradient-to-r from-[#262626] via-[#2d2e33] to-[#232322] text-[12px] text-white">
      <S w={16} h={16} className="ml-[16px]"><path d="M0 2l7-1v6.500H0zM8 1l8-1v7.500H8zM0 8.500h7V15l-7-1zM8 8.500h8V16l-8-1z" fill="#fff" /></S>
      <div className="ml-[16px] flex h-[40px] w-[288px] items-center border border-[#bdbdbd] bg-[#f2f2f2] text-[#333]">
        <S w={17} h={17} className="ml-[11px]"><circle cx="10.500" cy="6" r="5.300" stroke="#222" strokeWidth="1.300" /><path d="M6.700 9.800L.5 16" stroke="#222" strokeWidth="1.300" /></S>
        <T className="ml-[11px] mt-px w-[128px] text-[15px]">Type here to search</T>
      </div>
      <S w={17} h={16} className="ml-[16px]"><path d="M.5 0v2.500h10V0M.5 16v-2.500h10V16M.5 4.500h10v7H.5zM14.500 0v3M14.500 8v8" stroke="#fff" /><path d="M13 4h3v3h-3z" fill="#fff" /></S>
      <S w={4} h={16} className="ml-[21px]"><path d="M.5 0v16M3.500 0v16" stroke="#5a5a5a" /></S>
      <TaskButton className="ml-[17px] w-[40px]" active>
        <S w={22} h={19}><path d="M0 1h8l2 2h12v3H0z" fill="#e3a21a" /><path d="M0 4h22v14H0z" fill="#fbd15b" /><path d="M4 18.500V12q0-2 2-2h10q2 0 2 2v6.500h-3.500V15h-7v3.500z" fill="#3a94dd" /></S>
      </TaskButton>
      <TaskButton className="ml-[9px] w-[40px]">
        <S w={22} h={22}><path d="M2 2v13q5 3 11 0V2z" fill="#f7c325" /><path d="M9 3h4v12l-4 1z" fill="#fbd800" /><ellipse cx="7.500" cy="2.500" rx="5.500" ry="2.200" fill="#f0a860" /><path d="M16 1h5v5M.7 16v5H6" stroke="#4aa24a" strokeWidth="1.800" /><path d="M11 21l8-8M12 13l8 8M10 14l3-2.500M17.500 11.500l1 3 3 .5" stroke="#9a55b8" strokeWidth="1.800" /></S>
      </TaskButton>
      <TaskButton className="ml-[9px] w-[40px]">
        <S w={19} h={24}><path d="M11 0h7q1 0 1 1v23h-8z" fill="#d8920f" /><path d="M5 6h8q1 0 1 1v17H5z" fill="#efbb2a" /><path d="M0 12h7q2 0 2 1v11H1q-1 0-1-1z" fill="#fbdc6a" /></S>
      </TaskButton>
      <TaskButton className="ml-[9px] w-[40px]" active>
        <S w={24} h={24}>
          <path d="M1.600 6A12 12 0 0 1 22.400 6H12L7 15z" fill="#ea4335" />
          <path d="M22.400 6A12 12 0 0 1 12 24L17.200 15 12 6z" fill="#fbc116" />
          <path d="M12 24A12 12 0 0 1 1.600 6L6.800 15H17.200z" fill="#34a853" />
          <circle cx="12" cy="12" r="5.900" fill="#fff" /><circle cx="12" cy="12" r="4.700" fill="#3b78e7" />
        </S>
      </TaskButton>
      <TaskButton className="ml-[5px] w-[48px] bg-[#58595b]" active>
        <S w={22} h={22}><path d="M12 3h9.500v16H12z" fill="#fff" stroke="#217346" /><path d="M14 6h7M14 9h7M14 12h7M14 15h7M17.500 4v14" stroke="#217346" /><path d="M0 2.500L13 0v22L0 19.500z" fill="#1d7044" /><path d="M3.500 7l5 8M8.500 7l-5 8" stroke="#fff" strokeWidth="1.900" /></S>
      </TaskButton>
      <TaskButton className="ml-[5px] w-[40px]" active>
        <S w={22} h={22}><rect width="22" height="22" rx="2.500" fill="#2372c4" /><path d="M14 5h8v13L12 8z" fill="#6a5fb0" /><path d="M0 18L10 8q1-1 2 0l10 10v2q0 2-2 2H2q-2 0-2-2z" fill="#1f8fdd" /><path d="M1 21.500l9.500-9.500q1-1 2 0L14 13.500 6 22H2z" fill="#5fd3f5" /><circle cx="16.500" cy="4" r="2" fill="#fff" /></S>
      </TaskButton>
      <TaskButton className="ml-[9px] w-[40px]" active>
        <S w={18} h={18}><circle cx="9" cy="9" r="5.500" stroke="#fff" strokeWidth="2.600" /><circle cx="9" cy="9" r="7.800" stroke="#fff" strokeWidth="2.400" strokeDasharray="3.060 3.060" /></S>
      </TaskButton>
      <S w={4} h={16} className="ml-[122px]"><path d="M.5 0v16M3.500 0v16" stroke="#6a6a6a" /></S>
      <T className="ml-[10px] w-[43px] text-[#dcdcdc]">Desktop</T>
      <S w={9} h={6} className="mb-[21px] ml-[7px]"><path d="M1 0l3 3-3 3M5 0l3 3-3 3" stroke="#fff" strokeWidth="1.500" /></S>
      <S w={25} h={22} className="ml-[44px]">
        <path d="M3 12c5 4 11 2 12-4 6 4 4 13-4 14-4 0-8-4-8-10z" fill="#f08f24" /><path d="M2 8a3 3 0 0 1 1-5 5 5 0 0 1 9 0 3 3 0 0 1 0 5z" fill="#b9d6fa" /><path d="M11 21a3 3 0 0 1 1-5 5 4 0 0 1 9-1 3 3 0 0 1 2 6z" fill="#c3dcfb" />
        <circle cx="18.500" cy="6" r="6" fill="#c42b1c" /><text x="18.500" y="9.500" fontSize="9" textAnchor="middle" fill="#fff">1</text>
      </S>
      <T className="ml-[7px] w-[30px] text-[14px]">26°C</T>
      <T className="ml-[8px] w-[79px] text-[13.500px]">Partly cloudy</T>
      <S w={12} h={7} className="ml-[25px]"><path d="M.5 6.500l5.500-6 5.500 6" stroke="#fff" strokeWidth="1.300" /></S>
      <S w={17} h={14} className="ml-[9px]"><path d="M.5 4.500h3l4-3.500v12l-4-3.500h-3zM9.500 5q1.500 2 0 4M11.500 3q3 4 0 8M13.500 1q5 6 0 12" stroke="#fff" /></S>
      <S w={16} h={10} className="ml-[9px]"><path d="M.5.5h12v8H.5zM14.500 3v3" stroke="#fff" /><path d="M2 2h7v5H2z" fill="#fff" /></S>
      <S w={17} h={17} className="ml-[7px]"><circle cx="8" cy="7.500" r="7" stroke="#fff" /><ellipse cx="8" cy="7.500" rx="3.200" ry="7" stroke="#fff" /><path d="M1.500 5h13M1.500 10h13" stroke="#fff" /><circle cx="12.500" cy="12.500" r="4.700" fill="#242424" /><circle cx="12.500" cy="12.500" r="3.300" stroke="#fff" /><path d="M10.500 10.500l4 4" stroke="#fff" /></S>
      <div className="ml-[11px] flex flex-col items-center">
        <T className="h-[18px] w-[48px] leading-[18px]">12:46 AM</T>
        <T className="h-[18px] w-[46px] leading-[18px]">7/6/2025</T>
      </div>
      <S w={16} h={17} className="ml-[20px]"><path d="M.5.5h15v12h-5l-2.500 3-2.500-3h-5z" stroke="#fff" strokeWidth="1.200" /></S>
      <div className="ml-[20px] h-[40px] w-px bg-[#6a6a6a]" />
    </div>
  );
}

export default function App() {
  return (
    <div className={"flex h-[768px] w-[1366px] flex-col overflow-hidden bg-[#e6e6e6] " + UI}>
      <TitleBar />
      <Ribbon />
      <QuickAccess />
      <FormulaBar />
      <div className="flex h-[467px] shrink-0">
        <div className="flex w-[1081px] shrink-0 flex-col">
          <div className="flex h-[439px]">
            <Sheet />
            <VScroll />
          </div>
          <SheetTabs />
        </div>
        <Pane />
      </div>
      <StatusBar />
      <Taskbar />
    </div>
  );
}
